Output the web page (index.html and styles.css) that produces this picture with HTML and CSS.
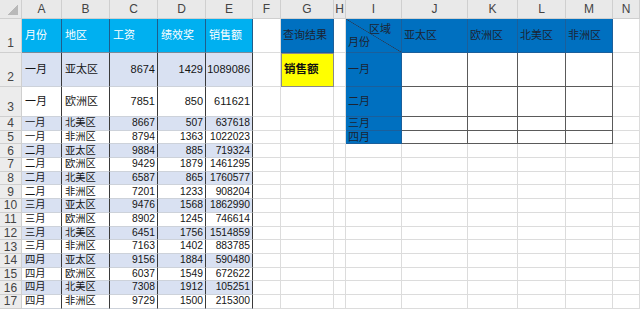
FILE: index.html
```html
<!DOCTYPE html>
<html lang="zh">
<head>
<meta charset="utf-8">
<title>Sheet</title>
<link rel="stylesheet" href="styles.css">
</head>
<body>
<div class="sheet">
  <!-- column headers -->
  <div class="c corner"><span class="tri"></span></div>
  <div class="c ch">A</div><div class="c ch">B</div><div class="c ch">C</div><div class="c ch">D</div><div class="c ch">E</div><div class="c ch">F</div><div class="c ch">G</div><div class="c ch">H</div><div class="c ch">I</div><div class="c ch">J</div><div class="c ch">K</div><div class="c ch">L</div><div class="c ch">M</div><div class="c ch">N</div>

  <!-- row 1 -->
  <div class="c rh tall">1</div>
  <div class="c h d">月份</div><div class="c h d">地区</div><div class="c h d">工资</div><div class="c h d">绩效奖</div><div class="c h d">销售额</div>
  <div class="c"></div>
  <div class="c bl">查询结果</div>
  <div class="c"></div>
  <div class="c bl diag"><span class="dt">区域</span><span class="db">月份</span></div>
  <div class="c bl">亚太区</div><div class="c bl">欧洲区</div><div class="c bl">北美区</div><div class="c bl">非洲区</div>
  <div class="c"></div>

  <!-- row 2 -->
  <div class="c rh tall">2</div>
  <div class="c d b lg">一月</div><div class="c d b lg">亚太区</div><div class="c d b lg n">8674</div><div class="c d b lg n">1429</div><div class="c d b lg n">1089086</div>
  <div class="c"></div>
  <div class="c yl">销售额</div>
  <div class="c"></div>
  <div class="c bl lg">一月</div>
  <div class="c t"></div><div class="c t"></div><div class="c t"></div><div class="c t"></div>
  <div class="c"></div>

  <!-- row 3 -->
  <div class="c rh tall">3</div>
  <div class="c d lg">一月</div><div class="c d lg">欧洲区</div><div class="c d lg n">7851</div><div class="c d lg n">850</div><div class="c d lg n">611621</div>
  <div class="c"></div><div class="c"></div><div class="c"></div>
  <div class="c bl lg">二月</div>
  <div class="c t"></div><div class="c t"></div><div class="c t"></div><div class="c t"></div>
  <div class="c"></div>

  <!-- row 4 -->
  <div class="c rh">4</div>
  <div class="c d b">一月</div><div class="c d b">北美区</div><div class="c d b n">8667</div><div class="c d b n">507</div><div class="c d b n">637618</div>
  <div class="c"></div><div class="c"></div><div class="c"></div>
  <div class="c bl">三月</div>
  <div class="c t"></div><div class="c t"></div><div class="c t"></div><div class="c t"></div>
  <div class="c"></div>

  <!-- row 5 -->
  <div class="c rh">5</div>
  <div class="c d">一月</div><div class="c d">非洲区</div><div class="c d n">8794</div><div class="c d n">1363</div><div class="c d n">1022023</div>
  <div class="c"></div><div class="c"></div><div class="c"></div>
  <div class="c bl">四月</div>
  <div class="c t"></div><div class="c t"></div><div class="c t"></div><div class="c t"></div>
  <div class="c"></div>

  <!-- row 6 -->
  <div class="c rh">6</div>
  <div class="c d b">二月</div><div class="c d b">亚太区</div><div class="c d b n">9884</div><div class="c d b n">885</div><div class="c d b n">719324</div>
  <div class="c"></div><div class="c"></div><div class="c"></div><div class="c"></div><div class="c"></div><div class="c"></div><div class="c"></div><div class="c"></div><div class="c"></div>

  <!-- row 7 -->
  <div class="c rh">7</div>
  <div class="c d">二月</div><div class="c d">欧洲区</div><div class="c d n">9429</div><div class="c d n">1879</div><div class="c d n">1461295</div>
  <div class="c"></div><div class="c"></div><div class="c"></div><div class="c"></div><div class="c"></div><div class="c"></div><div class="c"></div><div class="c"></div><div class="c"></div>

  <!-- row 8 -->
  <div class="c rh">8</div>
  <div class="c d b">二月</div><div class="c d b">北美区</div><div class="c d b n">6587</div><div class="c d b n">865</div><div class="c d b n">1760577</div>
  <div class="c"></div><div class="c"></div><div class="c"></div><div class="c"></div><div class="c"></div><div class="c"></div><div class="c"></div><div class="c"></div><div class="c"></div>

  <!-- row 9 -->
  <div class="c rh">9</div>
  <div class="c d">二月</div><div class="c d">非洲区</div><div class="c d n">7201</div><div class="c d n">1233</div><div class="c d n">908204</div>
  <div class="c"></div><div class="c"></div><div class="c"></div><div class="c"></div><div class="c"></div><div class="c"></div><div class="c"></div><div class="c"></div><div class="c"></div>

  <!-- row 10 -->
  <div class="c rh">10</div>
  <div class="c d b">三月</div><div class="c d b">亚太区</div><div class="c d b n">9476</div><div class="c d b n">1568</div><div class="c d b n">1862990</div>
  <div class="c"></div><div class="c"></div><div class="c"></div><div class="c"></div><div class="c"></div><div class="c"></div><div class="c"></div><div class="c"></div><div class="c"></div>

  <!-- row 11 -->
  <div class="c rh">11</div>
  <div class="c d">三月</div><div class="c d">欧洲区</div><div class="c d n">8902</div><div class="c d n">1245</div><div class="c d n">746614</div>
  <div class="c"></div><div class="c"></div><div class="c"></div><div class="c"></div><div class="c"></div><div class="c"></div><div class="c"></div><div class="c"></div><div class="c"></div>

  <!-- row 12 -->
  <div class="c rh">12</div>
  <div class="c d b">三月</div><div class="c d b">北美区</div><div class="c d b n">6451</div><div class="c d b n">1756</div><div class="c d b n">1514859</div>
  <div class="c"></div><div class="c"></div><div class="c"></div><div class="c"></div><div class="c"></div><div class="c"></div><div class="c"></div><div class="c"></div><div class="c"></div>

  <!-- row 13 -->
  <div class="c rh">13</div>
  <div class="c d">三月</div><div class="c d">非洲区</div><div class="c d n">7163</div><div class="c d n">1402</div><div class="c d n">883785</div>
  <div class="c"></div><div class="c"></div><div class="c"></div><div class="c"></div><div class="c"></div><div class="c"></div><div class="c"></div><div class="c"></div><div class="c"></div>

  <!-- row 14 -->
  <div class="c rh">14</div>
  <div class="c d b">四月</div><div class="c d b">亚太区</div><div class="c d b n">9156</div><div class="c d b n">1884</div><div class="c d b n">590480</div>
  <div class="c"></div><div class="c"></div><div class="c"></div><div class="c"></div><div class="c"></div><div class="c"></div><div class="c"></div><div class="c"></div><div class="c"></div>

  <!-- row 15 -->
  <div class="c rh">15</div>
  <div class="c d">四月</div><div class="c d">欧洲区</div><div class="c d n">6037</div><div class="c d n">1549</div><div class="c d n">672622</div>
  <div class="c"></div><div class="c"></div><div class="c"></div><div class="c"></div><div class="c"></div><div class="c"></div><div class="c"></div><div class="c"></div><div class="c"></div>

  <!-- row 16 -->
  <div class="c rh">16</div>
  <div class="c d b">四月</div><div class="c d b">北美区</div><div class="c d b n">7308</div><div class="c d b n">1912</div><div class="c d b n">105251</div>
  <div class="c"></div><div class="c"></div><div class="c"></div><div class="c"></div><div class="c"></div><div class="c"></div><div class="c"></div><div class="c"></div><div class="c"></div>

  <!-- row 17 -->
  <div class="c rh">17</div>
  <div class="c d">四月</div><div class="c d">非洲区</div><div class="c d n">9729</div><div class="c d n">1500</div><div class="c d n">215300</div>
  <div class="c"></div><div class="c"></div><div class="c"></div><div class="c"></div><div class="c"></div><div class="c"></div><div class="c"></div><div class="c"></div><div class="c"></div>
</div>
</body>
</html>
```

FILE: styles.css
```css
html, body {
  margin: 0;
  padding: 0;
  background: #ffffff;
}

body {
  font-family: "Liberation Sans", "Noto Sans CJK SC", sans-serif;
}

.sheet {
  display: grid;
  grid-template-columns: 22px 40px 48px 48px 48px 47px 28px 53px 12px 56px 66px 50px 48px 47px 27px;
  grid-template-rows: 19px 34px 34px 30px repeat(14, 13.7px);
  width: 640px;
  height: 309px;
  overflow: hidden;
}

.c {
  box-sizing: border-box;
  border-right: 1px solid #dcdcdc;
  border-bottom: 1px solid #dcdcdc;
  display: flex;
  align-items: center;
  padding: 0 2px;
  font-size: 10.3px;
  line-height: 1;
  color: #151515;
  white-space: nowrap;
  overflow: hidden;
  min-width: 0;
  min-height: 0;
}

.corner {
  background: #e9e9e9;
  justify-content: flex-end;
  align-items: flex-end;
  padding: 0 3px 3px 0;
  border-color: #cfcfcf;
}

.tri {
  width: 10px;
  height: 10px;
  background: linear-gradient(to bottom right, transparent 50%, #b9b9b9 50%);
}

.ch {
  background: #e9e9e9;
  justify-content: center;
  color: #444444;
  font-size: 12px;
  border-color: #cfcfcf;
}

.rh {
  background: #ececec;
  justify-content: center;
  color: #444444;
  font-size: 12px;
  border-color: #cfcfcf;
}

.rh.tall {
  align-items: flex-end;
  padding-bottom: 3px;
}

.h {
  background: #00b0f0;
  color: #ffffff;
  font-size: 11px;
  padding-left: 3px;
}

.d {
  border-right-color: #3a3a3a;
  border-bottom-color: #cdd2da;
  padding-left: 3px;
}

.h.d {
  border-right-color: #1f5d8c;
  border-bottom-color: #7a8a99;
}

.b {
  background: #d9e1f2;
}

.lg {
  font-size: 11px;
}

.n {
  justify-content: flex-end;
  padding-right: 2px;
}

.bl {
  background: #0070c0;
  color: #1c2433;
  font-size: 11px;
  border-right-color: #1b5f9b;
  border-bottom-color: #1b5f9b;
}

.yl {
  background: #ffff00;
  color: #111111;
  font-weight: bold;
  font-size: 11.5px;
  border: 1px solid #8a8a8a;
}

.t {
  border-right-color: #5a5a5a;
  border-bottom-color: #5a5a5a;
}

.diag {
  flex-direction: column;
  align-items: stretch;
  justify-content: center;
  gap: 2px;
  background:
    linear-gradient(to top right, transparent calc(50% - 0.6px), #2a3a55 50%, transparent calc(50% + 0.6px)),
    #0070c0;
}

.dt {
  align-self: flex-end;
  padding-right: 8px;
}

.db {
  align-self: flex-start;
}
```
